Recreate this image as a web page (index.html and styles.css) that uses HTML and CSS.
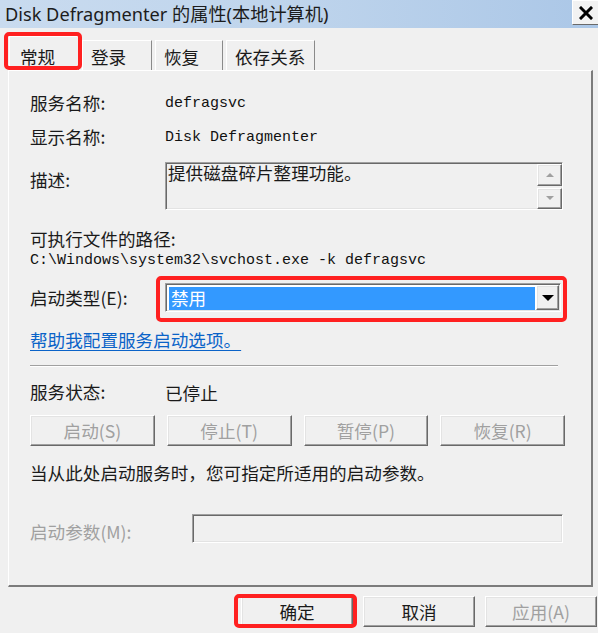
FILE: index.html
```html
<!DOCTYPE html>
<html lang="zh-CN">
<head>
<meta charset="utf-8">
<title>Disk Defragmenter 的属性(本地计算机)</title>
<link rel="stylesheet" href="styles.css">
</head>
<body>
<div class="window">
  <div class="titlebar">
    <span class="title">Disk Defragmenter 的属性(本地计算机)</span>
    <div class="close">
      <svg width="14" height="14" viewBox="0 0 14 14"><path d="M2 2 L12 12 M12 2 L2 12" stroke="#000" stroke-width="3" stroke-linecap="square"/></svg>
    </div>
  </div>

  <div class="tabs">
    <div class="tab active hl hl-tab">常规</div>
    <div class="tab t2">登录</div>
    <div class="tab t3">恢复</div>
    <div class="tab t4">依存关系</div>
  </div>

  <div class="panel">
    <div class="row r1">
      <span class="label">服务名称:</span>
      <span class="mono">defragsvc</span>
    </div>
    <div class="row r2">
      <span class="label">显示名称:</span>
      <span class="mono">Disk Defragmenter</span>
    </div>
    <div class="row r3">
      <span class="label label-top">描述:</span>
      <div class="desc sunken">
        <div class="desc-text">提供磁盘碎片整理功能。</div>
        <div class="scroll">
          <div class="sbtn raised"><span class="tri-up"></span></div>
          <div class="sbtn raised"><span class="tri-down"></span></div>
        </div>
      </div>
    </div>
    <div class="line r4">可执行文件的路径:</div>
    <div class="line mono r5">C:\Windows\system32\svchost.exe -k defragsvc</div>
    <div class="row r6">
      <span class="label">启动类型(E):</span>
      <div class="select sunken hl hl-select">
        <div class="sel-value">禁用</div>
        <div class="sel-btn raised"><span class="tri-down black"></span></div>
      </div>
    </div>
    <div class="line r7"><span class="link">帮助我配置服务启动选项。</span></div>
    <div class="sep"></div>
    <div class="row r8">
      <span class="label">服务状态:</span>
      <span>已停止</span>
    </div>
    <div class="actions">
      <div class="btn raised disabled">启动(S)</div>
      <div class="btn raised disabled">停止(T)</div>
      <div class="btn raised disabled">暂停(P)</div>
      <div class="btn raised disabled">恢复(R)</div>
    </div>
    <div class="line r9">当从此处启动服务时，您可指定所适用的启动参数。</div>
    <div class="row r10">
      <span class="label label-params disabled">启动参数(M):</span>
      <div class="params sunken"></div>
    </div>
  </div>

  <div class="footer">
    <div class="btn fbtn raised hl hl-ok">确定</div>
    <div class="btn fbtn raised">取消</div>
    <div class="btn fbtn raised disabled">应用(A)</div>
  </div>
</div>
</body>
</html>
```

FILE: styles.css
```css
* { box-sizing: border-box; }
html, body { margin: 0; padding: 0; }
body {
  width: 598px;
  height: 633px;
  overflow: hidden;
  background: #f0f0f0;
  font-family: "Noto Sans CJK SC", "Noto Sans", sans-serif;
  font-size: 17.6px;
  color: #1a1a1a;
}
.window { width: 598px; height: 633px; }

/* title bar */
.titlebar {
  height: 28px;
  background: linear-gradient(90deg, #c9dbef 0%, #bed4ec 50%, #abc7e7 100%);
  display: flex;
  justify-content: space-between;
  align-items: flex-start;
  padding-left: 5px;
}
.title {
  font-family: "Noto Sans", "Noto Sans CJK SC", sans-serif;
  font-size: 18.2px;
  line-height: 28px;
  color: #1c1c1c;
}
.close {
  width: 27px;
  height: 25px;
  margin-right: -1px;
  background: #f2f2f2;
  border: 1px solid;
  border-color: #fff #8a8a8a #6a6a6a #fff;
  display: flex;
  align-items: center;
  justify-content: center;
}

/* tabs */
.tabs {
  height: 42px;
  display: flex;
  align-items: flex-end;
  padding-left: 9px;
}
.tab {
  height: 30px;
  border: 1px solid;
  border-bottom: none;
  border-color: #fff #8a8a8a transparent #fff;
  padding-left: 8px;
  display: flex;
  align-items: flex-end;
  line-height: 24px;
  padding-bottom: 1px;
  width: 70px;
}
.tab.active { height: 34px; width: 70px; padding-left: 10px; }
.t2 { margin-left: 3px; width: 70px; }
.t3 { margin-left: 3px; width: 68px; }
.t4 { margin-left: 3px; width: 89px; }

/* annotation marks */
.hl { position: relative; }
.hl::after {
  content: "";
  position: absolute;
  border: 4px solid #ff2020;
  border-radius: 5px;
  pointer-events: none;
}
.hl-tab::after { left: -6px; right: -4px; top: -5px; bottom: 0; }
.hl-select::after { left: -10px; right: -7px; top: -8px; bottom: -11px; }
.hl-ok::after { left: -8px; right: -5px; top: -3px; bottom: -2px; }

/* panel */
.panel {
  margin-left: 8px;
  width: 585px;
  height: 517px;
  border-style: solid;
  border-width: 1px 2px 2px 1px;
  border-color: #fff #7c7c7c #7c7c7c #fff;
  padding: 20px 0 0 21px;
}
.row { display: flex; align-items: center; }
.label { width: 135px; flex: none; line-height: 24px; }
.line { line-height: 22px; height: 22px; }
.mono {
  font-family: "Liberation Mono", monospace;
  font-size: 15px;
  color: #111;
}

.r1 { height: 24px; }
.r2 { height: 24px; margin-top: 10px; }
.r3 { margin-top: 13px; align-items: flex-start; }
.label-top { margin-top: 6px; }
.r4 { margin-top: 18px; }
.r5 { margin-top: 0; }
.r6 { margin-top: 11px; height: 29px; }
.r7 { margin-top: 16px; height: 24px; line-height: 24px; }
.r8 { margin-top: 13px; height: 24px; }
.r9 { margin-top: 15px; height: 24px; line-height: 24px; }
.r10 { margin-top: 29px; align-items: flex-start; }
.label-params { width: 162px; margin-top: 6px; }

.sunken {
  border: 1px solid;
  border-color: #a0a0a0 #fff #fff #a0a0a0;
  box-shadow: inset 1px 1px #696969, inset -1px -1px #e3e3e3;
}
.raised {
  border: 1px solid;
  border-color: #fff #696969 #696969 #fff;
  box-shadow: inset -1px -1px #a0a0a0, inset 1px 1px #e3e3e3;
  background: #f0f0f0;
}

/* description box */
.desc {
  width: 398px;
  height: 48px;
  display: flex;
}
.desc-text {
  flex: 1;
  padding: 1px 0 0 2px;
  line-height: 18px;
}
.scroll {
  width: 25px;
  display: flex;
  flex-direction: column;
  gap: 2px;
  padding-top: 1px;
}
.sbtn {
  height: 22px;
  display: flex;
  align-items: center;
  justify-content: center;
}
.tri-up, .tri-down {
  width: 0; height: 0;
  border-left: 4px solid transparent;
  border-right: 4px solid transparent;
}
.tri-up { border-bottom: 4px solid #a0a0a0; }
.tri-down { border-top: 4px solid #a0a0a0; }
.tri-down.black {
  border-left-width: 6px;
  border-right-width: 6px;
  border-top: 6px solid #000;
}

/* select */
.select {
  width: 396px;
  height: 29px;
  display: flex;
  background: #fff;
  padding: 2px 1px 1px 3px;
}
.sel-value {
  flex: 1;
  margin: 1px 1px 0 0;
  background: #3399ff;
  color: #fff;
  padding-left: 2px;
  line-height: 22px;
}
.sel-btn {
  width: 23px;
  margin-top: -1px;
  display: flex;
  align-items: center;
  justify-content: center;
}

.link { color: #0a63c8; text-decoration: underline; text-underline-offset: 3px; }

.sep {
  margin-top: 13px;
  width: 528px;
  height: 2px;
  border-top: 1px solid #a0a0a0;
  border-bottom: 1px solid #fff;
}

.actions {
  margin-top: 11px;
  width: 535px;
  display: grid;
  grid-template-columns: repeat(4, 1fr);
  gap: 12px;
}
.btn {
  height: 31px;
  display: flex;
  align-items: center;
  justify-content: center;
  color: #1a1a1a;
}
.disabled { color: #a0a0a0; }

.params {
  width: 371px;
  height: 29px;
}

/* footer */
.footer {
  margin-top: 9px;
  display: flex;
  justify-content: flex-end;
  gap: 10px;
  padding-right: 1px;
}
.fbtn { width: 112px; }
```
